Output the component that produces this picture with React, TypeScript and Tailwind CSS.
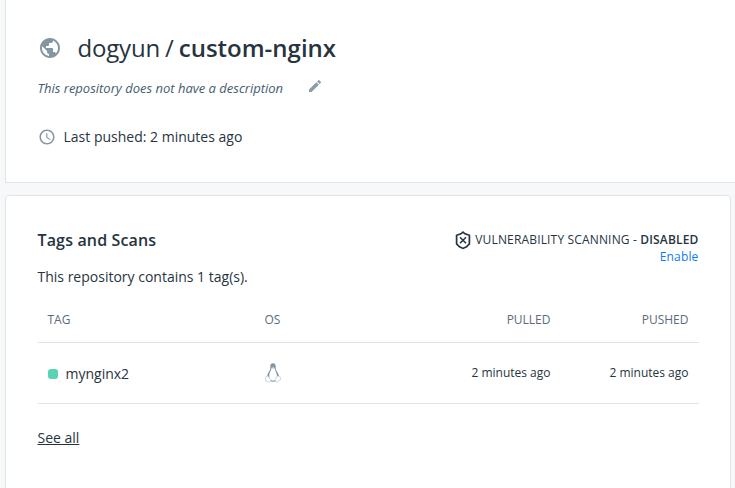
import React from "react";
import { MdPublic, MdEdit, MdAccessTime } from "react-icons/md";

function ShieldX() {
  return (
    <svg width="16" height="19" viewBox="0 0 16 19" fill="none" stroke="#27343f" strokeWidth="1.7">
      <path d="M8 1.2 L10 2.8 L14.4 4.3 V12.8 L11.5 15.8 L8 17.4 L4.5 15.8 L1.6 12.8 V4.3 L6 2.8 Z" />
      <path d="M5 6.3 L11 12.3 M11 6.3 L5 12.3" strokeWidth="1.5" />
    </svg>
  );
}

function Penguin() {
  return (
    <svg width="16" height="20" viewBox="0 0 16 20" fill="none">
      <path
        d="M8 .2 C5.9 .2 5.1 1.8 5.3 3.8 C5.5 6 5.1 6.9 4 8.6 C2.9 10.3 2.2 12 2.1 13.8 L5 18 C6.5 19 9.5 19 11 18 L14 13.8 C13.9 12 13 10.2 12 8.6 C10.9 6.9 10.6 6 10.7 3.8 C10.8 1.8 10.1 .2 8 .2 Z"
        fill="#8596a1"
      />
      <path
        d="M6.5 5.2 C7.3 4.2 8.8 4.2 9.6 5.2 C9.8 7.6 12 9.8 12 13 C12 15.8 10.3 17.7 8 17.7 C5.7 17.7 4.2 15.8 4.2 13 C4.2 9.8 6.3 7.6 6.5 5.2 Z"
        fill="#fff"
      />
      <path d="M6.4 4.9 L8 5.9 L9.7 4.9 L8 4.2 Z" fill="#c9d1d6" />
      <path
        d="M.6 14.1 L2.7 12.9 L5.6 16.6 C6.2 18 5.3 19.2 4 19 L.6 18 Z M15.4 14.1 L13.3 12.9 L10.8 14.6 L10.4 17.6 C10.5 19 11.7 19.5 12.8 18.6 L15.7 16.6 Z"
        fill="#fff"
        stroke="#c5ced4"
        strokeWidth=".8"
      />
    </svg>
  );
}

export default function App() {
  return (
    <div className="flex h-[488px] w-[735px] flex-col gap-3 overflow-hidden bg-[#f7f8fa] pl-[5px] font-['Open_Sans','Noto_Sans',sans-serif] text-sm text-[#27343f]">
      <section className="h-[183px] shrink-0 border-b border-l border-[#e1e4e7] bg-white pt-8 pl-[31.5px]">
        <div className="flex h-8 items-center">
          <MdPublic className="size-6 text-[#8596a1]" />
          <h1 className="ml-4 flex text-2xl leading-8 whitespace-nowrap">
            <span className="tracking-[-0.2px]">dogyun</span>
            <span className="mx-[5px]">/</span>
            <span className="font-semibold">custom-nginx</span>
          </h1>
        </div>
        <div className="mt-3.5 flex h-5 items-center text-[13px] text-[#445d6e]">
          <span className="w-[269.5px] italic">This repository does not have a description</span>
          <MdEdit className="mb-1 size-4 text-[#8c9ba8]" />
        </div>
        <div className="mt-[29px] flex h-5 items-center">
          <MdAccessTime className="size-[18px] text-[#8596a1]" />
          <span className="ml-2">Last pushed: 2 minutes ago</span>
        </div>
      </section>

      <section className="h-[300px] w-[726px] shrink-0 rounded-t-sm border border-[#e1e4e7] bg-white px-[31.5px] pt-[34px]">
        <div className="flex h-[37px] justify-between">
          <h2 className="text-base leading-5 font-semibold tracking-[0.15px]">Tags and Scans</h2>
          <div className="text-right text-xs">
            <div className="flex h-5 items-center">
              <ShieldX />
              <span className="ml-1 tracking-[0.16px]">
                VULNERABILITY SCANNING - <b className="font-semibold">DISABLED</b>
              </span>
            </div>
            <a className="block leading-[14px] tracking-[0.15px] text-[#0c7cf5]">Enable</a>
          </div>
        </div>
        <p className="leading-5">This repository contains 1 tag(s).</p>
        <table className="mt-2.5 w-full table-fixed border-collapse text-xs">
          <thead>
            <tr className="h-[45px] border-b border-[#e1e2e4] text-[#5c6b79]">
              <th className="w-[217px] px-2.5 pt-0.5 text-left font-normal">TAG</th>
              <th className="px-2.5 pt-0.5 text-left font-normal">OS</th>
              <th className="px-2.5 pt-0.5 text-right font-normal">PULLED</th>
              <th className="w-[138px] px-2.5 pt-0.5 text-right font-normal">PUSHED</th>
            </tr>
          </thead>
          <tbody>
            <tr className="h-[61px] border-b border-[#e1e2e4]">
              <td className="px-2.5 pt-0.5">
                <div className="flex items-center gap-2 text-sm">
                  <span className="size-2.5 rounded-[3px] bg-[#58d3b3]" />
                  mynginx2
                </div>
              </td>
              <td className="px-2.5"><Penguin /></td>
              <td className="px-2.5 text-right">2 minutes ago</td>
              <td className="px-2.5 text-right">2 minutes ago</td>
            </tr>
          </tbody>
        </table>
        <a className="mt-6 inline-block leading-5 underline">See all</a>
      </section>
    </div>
  );
}
